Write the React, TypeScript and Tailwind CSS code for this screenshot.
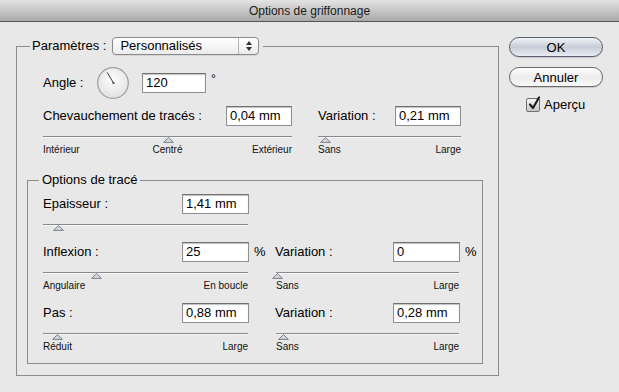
import React from 'react';

// Mac-style "Options de griffonnage" dialog

interface SliderProps {
  className: string;
  thumbClass: string;
  labels?: [string, string, string];
}

function Slider({ className, thumbClass, labels }: SliderProps) {
  return (
    <div className={`relative ${className}`}>
      <div className="h-[2px] border-t border-[#8a8a8a] bg-[#f6f6f6]" />
      <svg className={`absolute top-[1px] ${thumbClass}`} width="11" height="6" viewBox="0 0 11 6">
        <polygon points="5.5,0.6 10.4,5.4 0.6,5.4" fill="#cfd7e1" stroke="#7b7f86" strokeWidth="1" />
      </svg>
      {labels && (
        <div className="mt-[6px] grid grid-cols-[1fr_auto_1fr] text-[10px] leading-[12px] text-[#111]">
          <span>{labels[0]}</span>
          <span className="text-center">{labels[1]}</span>
          <span className="text-right">{labels[2]}</span>
        </div>
      )}
    </div>
  );
}

function Field({ value, className }: { value: string; className: string }) {
  return (
    <div
      className={`h-[20px] bg-white border border-[#8f8f8f] border-t-[#707070] shadow-[inset_0_1px_1px_rgba(0,0,0,0.25)] px-[3px] text-[13px] leading-[18px] text-black ${className}`}
    >
      {value}
    </div>
  );
}

function Dial() {
  return (
    <svg width="32" height="32" viewBox="0 0 32 32">
      <defs>
        <radialGradient id="dialFill" cx="50%" cy="40%" r="60%">
          <stop offset="0%" stopColor="#fdfdfd" />
          <stop offset="100%" stopColor="#e2e2e2" />
        </radialGradient>
      </defs>
      <circle cx="16" cy="16" r="15.3" fill="url(#dialFill)" stroke="#9d9d9d" strokeWidth="1.2" />
      <line x1="16.5" y1="16" x2="10.2" y2="5.4" stroke="#3a3a3a" strokeWidth="1" />
      <rect x="15.5" y="15" width="2" height="2" fill="#555" />
    </svg>
  );
}

function AquaButton({ label, primary }: { label: string; primary?: boolean }) {
  return (
    <div
      className={`h-[20px] w-[94px] rounded-full border flex items-center justify-center text-[13px] leading-none text-black shadow-[0_1px_1px_rgba(0,0,0,0.15)] ${
        primary
          ? 'border-[#596170] bg-gradient-to-b from-[#f2f4f7] via-[#c7cdd7] to-[#e9edf2]'
          : 'border-[#6a6a6a] bg-gradient-to-b from-white via-[#ececec] to-[#fafafa]'
      }`}
    >
      {label}
    </div>
  );
}

export default function App() {
  return (
    <div className="w-[619px] h-[392px] overflow-hidden bg-[#e8e8e8] font-['Liberation_Sans',Arial,sans-serif] text-[13px] text-black">
      {/* Title bar */}
      <div className="h-[22px] border-b border-[#555] bg-gradient-to-b from-[#e4e4e4] to-[#a9a9a9] flex items-center justify-center text-[12px] text-[#1b1b1b]">
        Options de griffonnage
      </div>

      <div className="flex pl-[16px] pt-[15px]">
        {/* Main group */}
        <fieldset className="w-[483px] border border-[#8b8b8b] pl-[10px] pb-[11px]">
          <legend className="ml-[3px] px-[2px] pr-[4px]">
            <span className="flex items-center h-[18px]">
              <span className="leading-[16px]">Paramètres :</span>
              <span className="ml-[6px] w-[147px] h-[18px] flex rounded-[4px] border border-[#8a8a8a] bg-gradient-to-b from-white to-[#ececec] shadow-[0_1px_0_rgba(0,0,0,0.08)]">
                <span className="flex-1 pl-[7px] leading-[16px]">Personnalisés</span>
                <span className="w-[20px] border-l border-[#b5b5b5] flex flex-col items-center justify-center gap-[2px]">
                  <svg width="6" height="4" viewBox="0 0 6 4"><polygon points="3,0 6,4 0,4" fill="#333" /></svg>
                  <svg width="6" height="4" viewBox="0 0 6 4"><polygon points="0,0 6,0 3,4" fill="#333" /></svg>
                </span>
              </span>
            </span>
          </legend>

          {/* Angle */}
          <div className="mt-[12px] pl-[16px] flex items-center h-[32px]">
            <span className="w-[54px]">Angle :</span>
            <Dial />
            <Field value="120" className="ml-[13px] w-[64px]" />
            <span className="ml-[5px] self-start mt-[6px] text-[12px] leading-none">°</span>
          </div>

          {/* Chevauchement / Variation */}
          <div className="mt-[7px] pl-[16px] flex">
            <div className="w-[249px]">
              <div className="flex items-center justify-between h-[20px]">
                <span>Chevauchement de tracés :</span>
                <Field value="0,04 mm" className="w-[66px]" />
              </div>
              <Slider className="mt-[10px] w-[249px]" thumbClass="left-[120px]" labels={['Intérieur', 'Centré', 'Extérieur']} />
            </div>
            <div className="ml-[26px] w-[143px]">
              <div className="flex items-center justify-between h-[20px]">
                <span>Variation :</span>
                <Field value="0,21 mm" className="w-[66px]" />
              </div>
              <Slider className="mt-[10px] w-[143px]" thumbClass="left-[2px]" labels={['Sans', '', 'Large']} />
            </div>
          </div>

          {/* Options de tracé */}
          <fieldset className="mt-[16px] w-[456px] border border-[#8b8b8b] pl-[11px] pb-[10px]">
            <legend className="px-[3px] leading-[16px]">Options de tracé</legend>
            <div className="pl-[4px]">
              <div className="mt-[6px] flex items-center justify-between w-[206px] h-[20px]">
                <span>Epaisseur :</span>
                <Field value="1,41 mm" className="w-[67px]" />
              </div>
              <Slider className="mt-[10px] w-[205px]" thumbClass="left-[10px]" />

              <div className="mt-[16px] flex items-center h-[20px]">
                <div className="w-[206px] flex items-center justify-between">
                  <span>Inflexion :</span>
                  <Field value="25" className="w-[67px]" />
                </div>
                <span className="w-[26px] pl-[5px]">%</span>
                <div className="w-[185px] flex items-center justify-between">
                  <span>Variation :</span>
                  <Field value="0" className="w-[67px]" />
                </div>
                <span className="pl-[5px]">%</span>
              </div>
              <div className="mt-[10px] flex">
                <Slider className="w-[205px]" thumbClass="left-[48px]" labels={['Angulaire', '', 'En boucle']} />
                <Slider className="ml-[28px] w-[183px]" thumbClass="left-[-4px]" labels={['Sans', '', 'Large']} />
              </div>

              <div className="mt-[11px] flex items-center h-[20px]">
                <div className="w-[206px] flex items-center justify-between">
                  <span>Pas :</span>
                  <Field value="0,88 mm" className="w-[67px]" />
                </div>
                <span className="w-[26px]" />
                <div className="w-[185px] flex items-center justify-between">
                  <span>Variation :</span>
                  <Field value="0,28 mm" className="w-[67px]" />
                </div>
              </div>
              <div className="mt-[10px] flex">
                <Slider className="w-[205px]" thumbClass="left-[9px]" labels={['Réduit', '', 'Large']} />
                <Slider className="ml-[28px] w-[183px]" thumbClass="left-[2px]" labels={['Sans', '', 'Large']} />
              </div>
            </div>
          </fieldset>
        </fieldset>

        {/* Buttons */}
        <div className="ml-[10px] flex flex-col">
          <AquaButton label="OK" primary />
          <div className="mt-[10px]">
            <AquaButton label="Annuler" />
          </div>
          <div className="mt-[10px] ml-[17px] flex items-center">
            <span className="relative w-[14px] h-[14px] rounded-[2px] border border-[#6d6d6d] bg-gradient-to-b from-[#f6f6f6] to-[#c6c6c6]">
              <svg className="absolute left-[1px] top-[-3px]" width="13" height="15" viewBox="0 0 13 15">
                <path d="M2 8.5 L5 12 L11 1.5" fill="none" stroke="#1e1e1e" strokeWidth="2.2" strokeLinecap="round" strokeLinejoin="round" />
              </svg>
            </span>
            <span className="ml-[4px] leading-[16px]">Aperçu</span>
          </div>
        </div>
      </div>
    </div>
  );
}
